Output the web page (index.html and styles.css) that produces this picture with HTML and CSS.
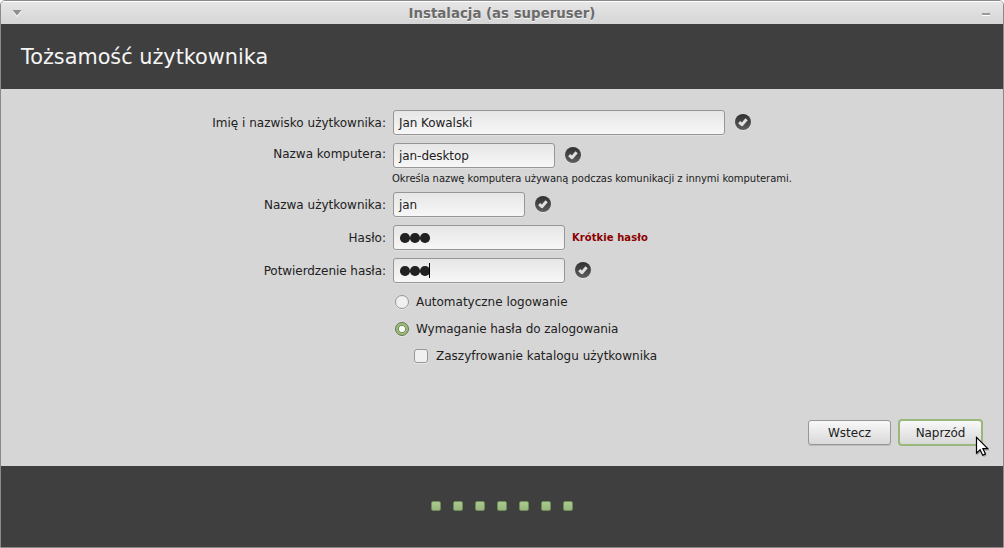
FILE: index.html
```
<!DOCTYPE html>
<html lang="pl">
<head>
<meta charset="utf-8">
<title>Instalacja</title>
<link rel="stylesheet" href="styles.css">
</head>
<body>
<svg width="0" height="0" class="defs">
  <defs>
    <linearGradient id="disc" x1="0" y1="0" x2="0" y2="1"><stop offset="0" stop-color="#303030"/><stop offset="1" stop-color="#5e5e5e"/></linearGradient>
    <symbol id="ok" viewBox="0 0 18 18">
      <circle cx="9" cy="9.8" r="8" fill="#e6e6e6"/>
      <circle cx="9" cy="9" r="8" fill="url(#disc)"/>
      <path d="M5.2 9.2 7.9 11.7 12.6 6.2" fill="none" stroke="#e0e0e0" stroke-width="3" stroke-linejoin="round"/>
    </symbol>
  </defs>
</svg>
<div class="window">
  <div class="titlebar">
    <svg class="menu" width="10" height="7" viewBox="0 0 10 7"><path d="M0.5 1h9L5 7z" fill="#fff"/><path d="M0.5 0h9L5 5.5z" fill="#8e8e8e"/></svg>
    <span class="caption">Instalacja (as superuser)</span>
    <span class="minimize"></span>
  </div>
  <header class="header"><h1>Tożsamość użytkownika</h1></header>
  <main class="content">
    <div class="row"><label>Imię i nazwisko użytkownika:</label><div class="entry full">Jan Kowalski</div><svg class="ok"><use href="#ok"/></svg></div>
    <div class="row"><label class="raised">Nazwa komputera:</label><div class="entry host">jan-desktop</div><svg class="ok"><use href="#ok"/></svg></div>
    <p class="hint">Określa nazwę komputera używaną podczas komunikacji z innymi komputerami.</p>
    <div class="row"><label>Nazwa użytkownika:</label><div class="entry user">jan</div><svg class="ok"><use href="#ok"/></svg></div>
    <div class="row"><label>Hasło:</label><div class="entry pass"><i></i><i></i><i></i></div><strong class="warning">Krótkie hasło</strong></div>
    <div class="row"><label class="confirm">Potwierdzenie hasła:</label><div class="entry pass"><i></i><i></i><i></i><span class="caret"></span></div><svg class="ok"><use href="#ok"/></svg></div>
    <div class="options">
      <div class="option"><span class="radio"></span><span class="text">Automatyczne logowanie</span></div>
      <div class="option"><span class="radio checked"></span><span class="text tight">Wymaganie hasła do zalogowania</span></div>
      <div class="option nested"><span class="check"></span><span class="text">Zaszyfrowanie katalogu użytkownika</span></div>
    </div>
    <div class="actions">
      <div class="button">Wstecz</div>
      <div class="button primary">Naprzód</div>
    </div>
  </main>
  <footer class="footer"><span></span><span></span><span></span><span></span><span></span><span></span><span></span></footer>
</div>
<svg class="cursor" width="15" height="22" viewBox="0 0 15 22"><path d="M2 2.5v17l4-3.7 2.6 5.3 3-1.4-2.5-5.2h5.2z" fill="#000" opacity=".25"/><path d="M1.5 1.4v15.8l3.6-3.4 2.6 5.4 2.8-1.3-2.6-5.2h4.9z" fill="#fff" stroke="#000" stroke-width="1.2"/></svg>
</body>
</html>
```
FILE: styles.css
```
* { box-sizing: border-box; }
body {
  margin: 0;
  width: 1004px;
  height: 548px;
  overflow: hidden;
  background: #fff;
  font: 12px/15px "DejaVu Sans", sans-serif;
  color: #212121;
  white-space: nowrap;
}
.defs { position: absolute; }
.window {
  display: flex;
  flex-direction: column;
  height: 548px;
  border: 1px solid #8b8989;
  border-radius: 5px 5px 0 0;
  overflow: hidden;
}
.titlebar {
  display: flex;
  align-items: center;
  height: 23px;
  padding: 0 13px 0 11px;
  border-top: 1px solid #fff;
  background: linear-gradient(#e6e6e6, #d5d5d5);
}
.caption {
  flex: 1;
  text-align: center;
  font-size: 13.33px;
  font-weight: bold;
  color: #6b6b6b;
  text-shadow: 0 1px #f5f5f5;
}
.minimize {
  width: 8px;
  height: 3px;
  margin-top: 3px;
  background: linear-gradient(#999 2px, #fff 2px);
}
.header {
  display: flex;
  align-items: center;
  height: 65px;
  padding: 0 20px;
  background: #3f3f3f;
}
h1 {
  margin: 0;
  font-size: 20.8px;
  line-height: 24px;
  font-weight: normal;
  color: #f5f5f5;
}
.content {
  flex: 1;
  display: flex;
  flex-direction: column;
  padding: 21px 20px 20px;
  background: #d6d6d6;
}
.row {
  display: flex;
  align-items: center;
  height: 25px;
  margin-bottom: 8px;
}
label {
  width: 365px;
  margin-right: 7px;
  padding-top: 2px;
  text-align: right;
}
.raised { margin-bottom: 5px; }
.confirm { letter-spacing: -0.06px; }
.entry {
  display: flex;
  align-items: center;
  height: 25px;
  padding: 2px 0 0 5px;
  border: 1px solid #969696;
  border-radius: 3px;
  background: linear-gradient(#e6e6e6, #f7f7f7);
  box-shadow: 0 1px #e0e0e0;
  letter-spacing: -0.06px;
}
.full { width: 332px; }
.host { width: 162px; }
.user { width: 132px; }
.pass { width: 172px; padding: 1px 0 0 6px; }
.pass i {
  width: 9.6px;
  height: 9.6px;
  margin-right: 0.4px;
  border-radius: 50%;
  background: #212121;
}
.caret {
  width: 1px;
  height: 15px;
  margin: -2px 0 0 -1px;
  background: #000;
}
.ok {
  width: 18px;
  height: 18px;
  margin: -1px 0 0 9px;
}
.warning {
  margin-left: 7px;
  font-size: 10px;
  letter-spacing: 0.06px;
  color: #8b0000;
}
.hint {
  height: 24px;
  margin: -8px 0 0 371px;
  padding-top: 3px;
  font-size: 10px;
  letter-spacing: -0.05px;
}
.options { margin: -3px 0 0 374px; }
.option {
  display: flex;
  align-items: center;
  height: 27px;
}
.text { padding-top: 1px; }
.tight { letter-spacing: -0.06px; }
.radio, .check {
  width: 14px;
  height: 14px;
  margin-right: 7px;
  border: 1px solid #969696;
  border-radius: 50%;
  background: #f0f0f0;
  box-shadow: 0 1px #e6e6e6;
}
.radio.checked {
  border-color: #647550;
  background: radial-gradient(circle, #fafafa 2.8px, #6e8c50 3.4px, #9dbb7d 4.4px);
}
.nested { padding-left: 19px; }
.check { margin-right: 8px; border-radius: 3px; }
.actions {
  display: flex;
  align-items: center;
  justify-content: flex-end;
  gap: 7px;
  height: 27px;
  margin-top: auto;
}
.button {
  width: 83px;
  height: 25px;
  border: 1px solid #969696;
  border-radius: 3px;
  background: linear-gradient(#f8f8f8, #d9d9d9);
  box-shadow: 0 1px #bcbcbc;
  text-align: center;
  line-height: 25px;
}
.primary {
  width: 85px;
  height: 27px;
  border: 2px solid #9ab87c;
  border-radius: 4px;
  box-shadow: none;
  letter-spacing: -0.06px;
}
.footer {
  display: flex;
  align-items: center;
  justify-content: center;
  gap: 12px;
  height: 81px;
  padding-bottom: 1px;
  background: #3f3f3f;
}
.footer span {
  width: 10px;
  height: 10px;
  border: 1px solid #718b59;
  border-radius: 2px;
  background: linear-gradient(#aac990, #98b77c);
}
.cursor {
  position: absolute;
  left: 975px;
  top: 436px;
}
```
